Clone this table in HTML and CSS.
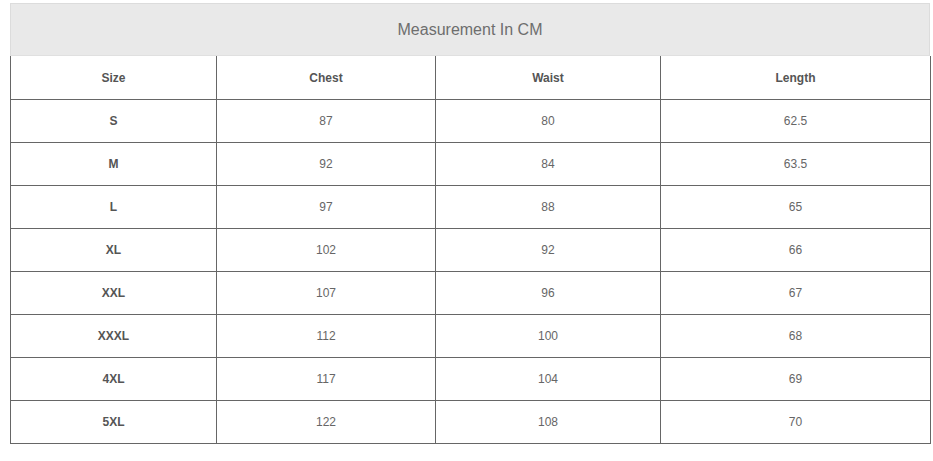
FILE: index.html
```html
<!DOCTYPE html>
<html>
<head>
<meta charset="utf-8">
<link rel="stylesheet" href="styles.css">
</head>
<body>
<div class="wrap">
  <div class="title">Measurement In CM</div>
  <table class="chart">
    <colgroup>
      <col class="c1"><col class="c2"><col class="c3"><col class="c4">
    </colgroup>
    <tr class="head"><td class="lbl">Size</td><td class="lbl">Chest</td><td class="lbl">Waist</td><td class="lbl">Length</td></tr>
    <tr><td class="lbl">S</td><td>87</td><td>80</td><td>62.5</td></tr>
    <tr><td class="lbl">M</td><td>92</td><td>84</td><td>63.5</td></tr>
    <tr><td class="lbl">L</td><td>97</td><td>88</td><td>65</td></tr>
    <tr><td class="lbl">XL</td><td>102</td><td>92</td><td>66</td></tr>
    <tr><td class="lbl">XXL</td><td>107</td><td>96</td><td>67</td></tr>
    <tr><td class="lbl">XXXL</td><td>112</td><td>100</td><td>68</td></tr>
    <tr><td class="lbl">4XL</td><td>117</td><td>104</td><td>69</td></tr>
    <tr><td class="lbl">5XL</td><td>122</td><td>108</td><td>70</td></tr>
  </table>
</div>
</body>
</html>
```
FILE: styles.css
```css
html, body {
  margin: 0;
  padding: 0;
  background: #fff;
}
body {
  font-family: "Liberation Sans", Arial, sans-serif;
}
.wrap {
  padding: 3px 0 0 10px;
  width: 920px;
}
.title {
  box-sizing: border-box;
  width: 920px;
  height: 53px;
  background: #e9e9e9;
  border: 1px solid #dcdcdc;
  border-bottom-color: #e0e0e0;
  color: #6e6e6e;
  font-size: 16px;
  display: flex;
  align-items: center;
  justify-content: center;
  padding-top: 1px;
}
.chart {
  border-collapse: collapse;
  table-layout: fixed;
  width: 920px;
}
.c1 { width: 206px; }
.c2 { width: 219px; }
.c3 { width: 225px; }
.c4 { width: 270px; }
.chart tr { height: 43px; }
.chart td {
  border: 1px solid #666;
  padding: 0;
  text-align: center;
  vertical-align: middle;
  font-size: 12px;
  color: #666;
}
.chart tr.head td {
  border-top: none;
  padding-top: 2px;
}
.chart td.lbl {
  font-weight: bold;
  color: #555;
}
```
